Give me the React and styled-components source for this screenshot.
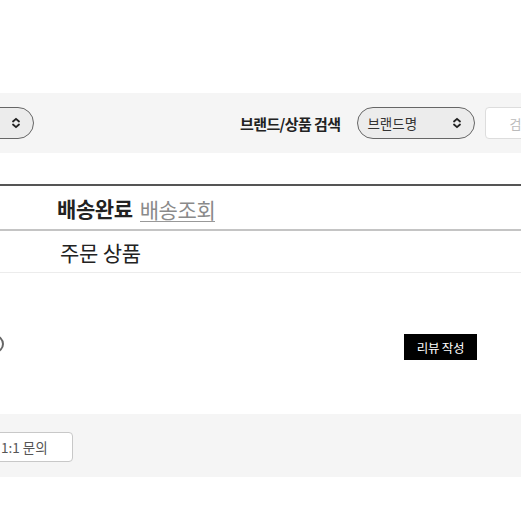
import styled, {createGlobalStyle} from "styled-components";

const GlobalStyle = createGlobalStyle`
    html, body {
        margin: 0;
        padding: 0;
        background: #fff;
        overflow: hidden;
    }
    body {
        font-family: "Noto Sans CJK KR", "Noto Sans", sans-serif;
        color: #222;
    }
`;

const Page = styled.div`
    width: 720px;
    margin-left: -100px;
    padding-top: 93px;
`;

const FilterBar = styled.div`
    display: flex;
    align-items: center;
    height: 60px;
    background: #f5f5f5;
    padding-left: 20px;
`;

const Select = styled.div`
    box-sizing: border-box;
    display: flex;
    align-items: center;
    justify-content: space-between;
    width: ${props => props.width}px;
    height: 32px;
    padding: 0 12px 0 9px;
    border: 1.5px solid #666;
    border-radius: 16px;
    background: #ececec;
    font-size: 13.5px;
    color: #333;
`;

const Label = styled.span`
    margin: 0 17px 0 206px;
    font-size: 15px;
    font-weight: 700;
    color: #222;
    letter-spacing: -0.6px;
`;

const SearchInput = styled.div`
    box-sizing: border-box;
    display: flex;
    align-items: center;
    margin-left: 10px;
    width: 110px;
    height: 32px;
    padding-left: 23px;
    background: #fff;
    border: 1px solid #ddd;
    border-radius: 4px;
    font-size: 13px;
    color: #bbb;
`;

const StatusRow = styled.div`
    display: flex;
    align-items: center;
    gap: 7px;
    height: 43px;
    margin-top: 31px;
    padding-left: 157px;
    border-top: 2px solid #555;
    border-bottom: 2px solid #c4c4c4;
`;

const Status = styled.span`
    font-size: 21px;
    font-weight: 700;
    letter-spacing: -0.4px;
`;

const TrackLink = styled.span`
    margin-top: 3px;
    font-size: 21px;
    color: #8a8a8a;
    letter-spacing: -0.4px;
    line-height: 24px;
    border-bottom: 1.5px solid #999;
`;

const ProductRow = styled.div`
    display: flex;
    align-items: center;
    height: 41px;
    padding-left: 160px;
    border-bottom: 1px solid #ececec;
    font-size: 21px;
    letter-spacing: -0.2px;
`;

const ActionArea = styled.div`
    display: flex;
    align-items: center;
    height: 141px;
    padding-left: 86px;
`;

const Radio = styled.span`
    width: 14px;
    height: 14px;
    border: 2px solid #666;
    border-radius: 50%;
`;

const ReviewButton = styled.button`
    margin: 7px 0 0 400px;
    width: 73px;
    height: 26px;
    padding: 0;
    border: none;
    background: #000;
    color: #fff;
    font-family: inherit;
    font-size: 12.5px;
    letter-spacing: -0.3px;
`;

const FooterBar = styled.div`
    display: flex;
    align-items: center;
    height: 63px;
    background: #f5f5f5;
    padding-left: 80px;
`;

const InquiryButton = styled.button`
    box-sizing: border-box;
    margin-top: 2px;
    width: 93px;
    height: 30px;
    padding: 0 0 0 20px;
    text-align: left;
    background: #fff;
    border: 1px solid #c8c8c8;
    border-radius: 4px;
    font-family: inherit;
    font-size: 13.5px;
    color: #555;
`;

function Chevrons() {
    return (
        <svg width="10" height="12" viewBox="0 0 10 12" fill="none" stroke="#222" strokeWidth="1.8"
             strokeLinecap="round" strokeLinejoin="round">
            <path d="M2 4.5 L5 1.8 L8 4.5"/>
            <path d="M2 7.5 L5 10.2 L8 7.5"/>
        </svg>
    );
}

export default function App() {
    return (
        <Page>
            <GlobalStyle/>
            <FilterBar>
                <Select width={114}><span/><Chevrons/></Select>
                <Label>브랜드/상품 검색</Label>
                <Select width={118}><span>브랜드명</span><Chevrons/></Select>
                <SearchInput>검색</SearchInput>
            </FilterBar>
            <StatusRow>
                <Status>배송완료</Status>
                <TrackLink>배송조회</TrackLink>
            </StatusRow>
            <ProductRow>주문 상품</ProductRow>
            <ActionArea>
                <Radio/>
                <ReviewButton>리뷰 작성</ReviewButton>
            </ActionArea>
            <FooterBar>
                <InquiryButton>1:1 문의</InquiryButton>
            </FooterBar>
        </Page>
    );
}
